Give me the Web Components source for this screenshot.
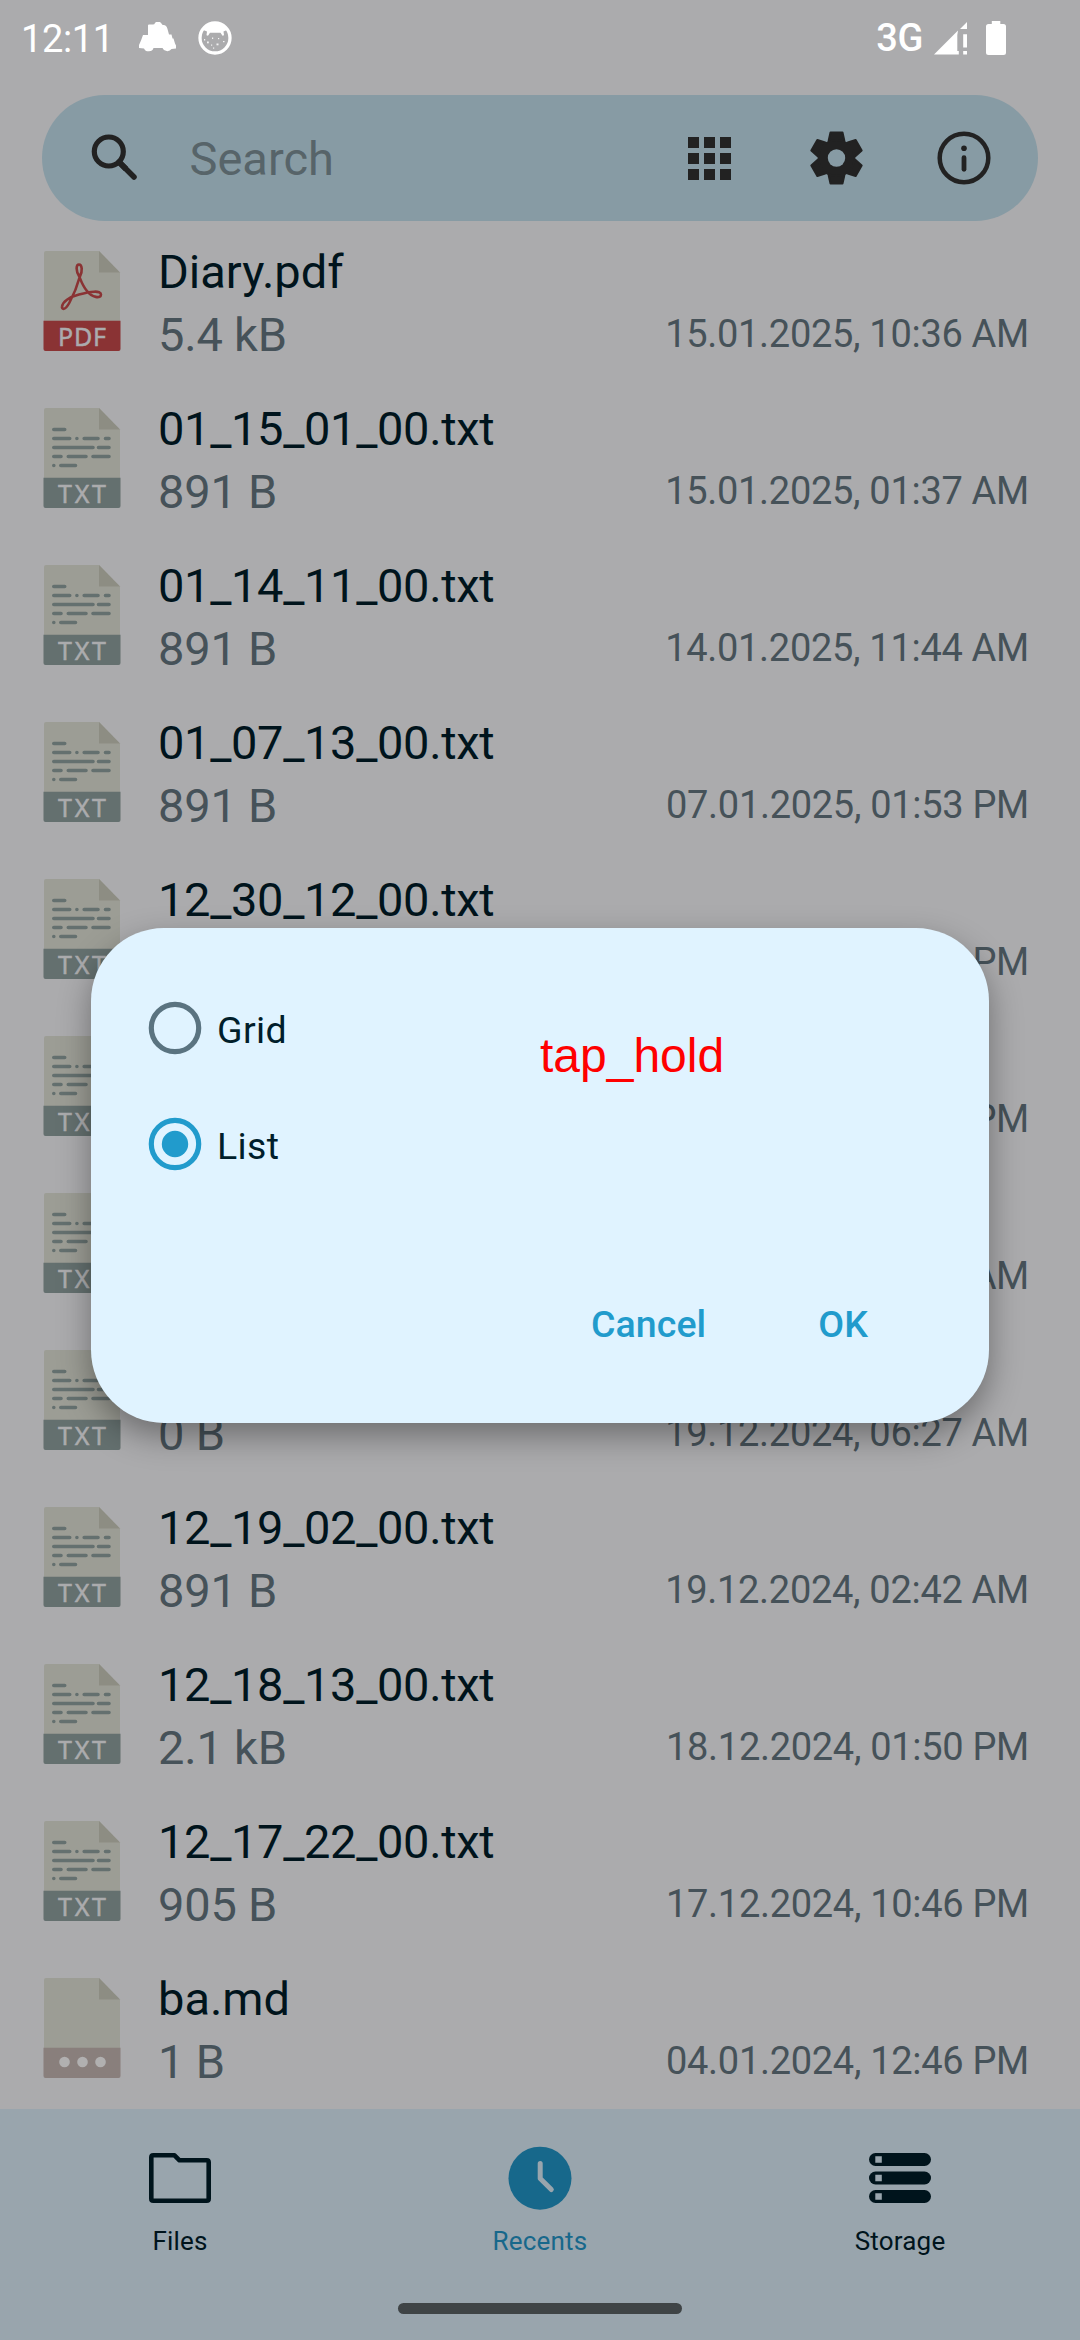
<!DOCTYPE html>
<html lang="en">
<head>
<meta charset="utf-8">
<title>Recents</title>
<style>
html,body{margin:0;padding:0}
body{width:1080px;height:2340px;overflow:hidden;background:#ababad;font-family:Roboto,sans-serif}
</style>
</head>
<body>
<file-app></file-app>
<script>
const define=(name,html)=>customElements.define(name,class extends HTMLElement{
  connectedCallback(){
    if(this.shadowRoot)return;
    const root=this.attachShadow({mode:'open'});
    root.innerHTML=typeof html==='function'?html(this):html;
  }
});

define('status-bar',`
<style>
:host{display:flex;align-items:center;height:76px;color:#fff;box-sizing:border-box;padding:0 74px 0 21px}
svg{display:block;flex:none}
.clock{font-size:38px;line-height:50px;letter-spacing:-.4px;margin-top:1px;width:118px}
.cat{margin-left:21px}
.net{margin-left:auto;font-size:38px;font-weight:500;line-height:50px;letter-spacing:-.4px;margin-right:11px}
.bat{margin-left:19px}
</style>
<span class="clock">12:11</span>
<svg width="38" height="34" viewBox="0 0 38 34" fill="#fff"><path d="M14 3.500Q15.500 3.500 16 2L17 1h4l1.500 1.500q.5 1.500 2 1.500 3 0 4 4l1.500 5.500h2.500l1 4h1l1.500 5 1 2v3l-4.500.5A5 4.500 0 0 1 23.500 27h-9A5 4.500 0 0 1 5 27.500L0 27v-3l2-4.500L4 14h5V4.500q0-1 1-1z"/></svg>
<svg class="cat" width="34" height="34" viewBox="0 0 34 34"><circle cx="17" cy="17" r="15" fill="none" stroke="#fff" stroke-width="3.300"/><path fill="#fff" d="M4 8.500Q9 2 17 2T30 8.500L25.500 10.500L26 14.300L24.500 14.800L22.500 11.800H12L10 14.800L8.500 14.300L9 10.500z"/><g fill="#fff" opacity=".85"><rect x="6" y="18" width="1.200" height="1.500"/><rect x="9" y="20.500" width="1.800" height="1.800"/><rect x="14" y="16.500" width="1.200" height="1.500"/><rect x="18.500" y="22.500" width="2" height="1.800"/><rect x="20" y="17" width="1.200" height="1.200"/><rect x="25" y="20" width="1.500" height="1.200"/><rect x="13" y="23.500" width="1.200" height="1.200"/><rect x="15" y="26.500" width="1.200" height="1.200"/></g></svg>
<span class="net">3G</span>
<svg width="33" height="34" viewBox="0 0 33 34" fill="#fff"><path d="M0 33.500L24 9.500L23.300 14V30H24.800V33.500zM26 8L33 1V8zM29.200 13.300H33V26.500H29.200zM29.200 30H33V33.500H29.200z"/></svg>
<svg class="bat" width="20" height="34" viewBox="0 0 20 34" fill="#fff"><path d="M5.800 0h8.500v3H17.500Q20 3 20 5.500V31.500Q20 34 17.500 34H2.500Q0 34 0 31.500V5.500Q0 3 2.500 3H5.800z"/></svg>`);

define('search-bar',`
<style>
:host{display:flex;align-items:center;height:126px;margin:19px 42px 4px;border-radius:63px;background:#879ba4;box-sizing:border-box;padding:0 47.500px 0 49px}
svg{display:block;flex:none}
.hint{font-size:47px;line-height:62px;color:#576469;margin:1px auto 0 50.500px}
.gear{margin-left:79px}.info{margin-left:74px}
</style>
<svg width="48" height="48" viewBox="0 0 48 48" fill="none" stroke="#222"><circle cx="17.800" cy="17.500" r="14.500" stroke-width="5.200"/><path d="M28 28L43 43" stroke-width="5.500" stroke-linecap="round"/><path d="M28 28l7 7" stroke-width="6"/></svg>
<span class="hint">Search</span>
<svg width="43" height="43" viewBox="0 0 43 43" fill="#222"><path d="M0 0h11v11H0zM16 0h11v11H16zM32 0h11v11H32zM0 16h11v11H0zM16 16h11v11H16zM32 16h11v11H32zM0 32h11v11H0zM16 32h11v11H16zM32 32h11v11H32z"/></svg>
<svg class="gear" width="53" height="54" viewBox="-26.500 -27 53 54"><defs><path id="t" d="M-7.800-17.500L-6-25.600H6L7.800-17.500L0 0z"/></defs><mask id="m"><rect x="-27" y="-27" width="54" height="54" fill="#fff"/><circle r="8.700" fill="#000"/></mask><g fill="#222" stroke="#222" stroke-width="2" stroke-linejoin="round" mask="url(#m)"><use href="#t"/><use href="#t" transform="rotate(60)"/><use href="#t" transform="rotate(120)"/><use href="#t" transform="rotate(180)"/><use href="#t" transform="rotate(240)"/><use href="#t" transform="rotate(300)"/><circle r="18"/></g></svg>
<svg class="info" width="54" height="54" viewBox="-27 -27 54 54"><circle r="24.300" fill="none" stroke="#222" stroke-width="4.500"/><circle cy="-9.800" r="2.800" fill="#222"/><path d="M0-.3V11.300" stroke="#222" stroke-width="4.800" stroke-linecap="round"/></svg>`);

const bands={pdf:'#8a3334',txt:'#64706f',md:'#897f7c'};
const art={
  pdf:`<path fill="none" stroke="#8a3334" stroke-width="2.600" stroke-linejoin="round" d="M36.500 26C32.500 20 33 13.500 36 13.500S40 20 36.700 26C34 36 30 45 26.500 51.500C22 60 18.500 58.500 19 55.500C19.600 51 26 46 36 43.500C47 40.500 58 39 58 43.500C58 48 49 46.500 44 40C40 35.500 38.500 31 36.500 26z"/>`,
  txt:`<path fill="none" stroke="#64706f" stroke-width="3.600" stroke-linecap="round" d="M10.800 21.500H21.700M10.800 30.500H26.700M33.900 30.500H33.901M41.200 30.500H55M62.500 30.500H66M10.800 39.500H50M55.500 39.500H66M10.800 48.500H18M25.300 48.500H43M50 48.500H66M10.800 57.500H10.801M17.800 57.500H32.500"/>`,
  md:''
};
define('file-icon',el=>{
  const k=el.getAttribute('kind');
  const tag=k==='md'
    ?'<g fill="#b1b0b0"><circle cx="21.500" cy="84" r="5.300"/><circle cx="39.500" cy="84" r="5.300"/><circle cx="57.500" cy="84" r="5.300"/></g>'
    :`<text x="39" y="94.800" text-anchor="middle" textLength="48" fill="#ababad" stroke="#ababad" stroke-width=".5" font-family="'Noto Sans',sans-serif" font-size="25">${k.toUpperCase()}</text>`;
  return `<style>:host{display:block;width:78px;height:100px;flex:none}svg{display:block;overflow:visible}</style>
<svg width="78" height="106" viewBox="0 0 78 106"><path fill="#9c9d95" d="M3 0H56L77 21.500V71H1V2Q1 0 3 0z"/><path fill="#8d8d83" d="M56 0L77 21.500H56z"/>${art[k]}<path fill="${bands[k]}" d="M.5 69.700H77.500V98Q77.500 100 75.500 100H2.500Q.5 100 .5 98z"/>${tag}</svg>`;
});

define('file-row',el=>`
<style>
:host{display:flex;height:157px;box-sizing:border-box;padding:0 51px 0 43px}
file-icon{margin-top:26px}
.main{display:flex;flex-direction:column;margin:15px 0 0 37px;font-size:47px}
.main span{display:block;height:63px;line-height:63px;white-space:nowrap}
.name{color:#00141c}.name.digits{letter-spacing:-.34px}.size{color:#465259;letter-spacing:-.2px}
.date{margin:84px 0 0 auto;font-size:38px;line-height:50px;letter-spacing:-.3px;color:#465259;white-space:nowrap}
</style>
<file-icon kind="${el.getAttribute('kind')}"></file-icon>
<div class="main"><span class="name${el.getAttribute('kind')==='txt'?' digits':''}">${el.getAttribute('name')||''}</span><span class="size">${el.getAttribute('size')||''}</span></div>
<span class="date"><slot></slot></span>`);

define('nav-item',el=>`
<style>
:host{display:flex;flex:1;flex-direction:column;align-items:center;color:${el.hasAttribute('active')?'#17688b':'#00141c'}}
.ic{height:64px;display:flex;align-items:center;margin-top:37px}
.label{font-size:26px;line-height:34px;margin-top:14px;letter-spacing:.2px}
</style><span class="ic"><slot name="icon"></slot></span><span class="label"><slot></slot></span>`);

define('bottom-nav',`
<style>
:host{display:flex;flex-direction:column;height:231px;background:#99a5ad}
.tabs{display:flex;height:194px}
.home{width:284px;height:11px;border-radius:5.500px;background:#3f4446;align-self:center}
svg{display:block}
</style>
<div class="tabs">
<nav-item><svg slot="icon" width="62" height="50" viewBox="0 0 62 50" fill="none" stroke="#00141c" stroke-width="4.600" stroke-linejoin="round"><path d="M4.300 2.300H25.500L30.500 7.300H57.700Q59.700 7.300 59.700 9.300V45.700Q59.700 47.700 57.700 47.700H4.300Q2.300 47.700 2.300 45.700V4.300Q2.300 2.300 4.300 2.300z"/></svg>Files</nav-item>
<nav-item active><svg slot="icon" width="64" height="64" viewBox="0 0 64 64"><circle cx="32" cy="32.200" r="31.500" fill="#17688b"/><path d="M32.200 17.500V32.500L43.300 43.500" fill="none" stroke="#99a5ad" stroke-width="5" stroke-linecap="round" stroke-linejoin="round"/></svg>Recents</nav-item>
<nav-item><svg slot="icon" width="62" height="50" viewBox="0 0 62 50"><g fill="#00141c"><rect width="62" height="13" rx="6.500"/><rect y="18.500" width="62" height="13" rx="6.500"/><rect y="37" width="62" height="13" rx="6.500"/></g><path fill="#99a5ad" d="M6.300 3.300h6.500v6.500H6.300zM6.300 21.800h6.500v6.500H6.300zM6.300 40.300h6.500v6.500H6.300z"/></svg>Storage</nav-item>
</div><div class="home"></div>`);

define('radio-option',el=>`
<style>
:host{display:flex;align-items:center;height:116px;font-size:37.500px;letter-spacing:.4px;color:#001e2b}
svg{display:block;margin-right:15px}
span{line-height:50px;margin-top:4px}
</style>
<svg width="54" height="54" viewBox="-27 -27 54 54"><circle r="23.700" fill="none" stroke="${el.hasAttribute('checked')?'#219bcc':'#5a7380'}" stroke-width="5.200"/>${el.hasAttribute('checked')?'<circle r="13.200" fill="#219bcc"/>':''}</svg>
<span><slot></slot></span>`);

define('view-dialog',`
<style>
:host{display:flex;flex-direction:column;width:898px;height:495px;box-sizing:border-box;border-radius:73px;background:#e0f3ff;box-shadow:0 13px 32px rgba(0,0,0,.36);padding:42px 57px 0}
.actions{display:flex;justify-content:flex-end;gap:112px;margin-top:97px;padding-right:64px;font-size:37.500px;font-weight:500;line-height:50px;letter-spacing:.1px;color:#219bcc}
</style>
<radio-option>Grid</radio-option>
<radio-option checked>List</radio-option>
<div class="actions"><span>Cancel</span><span>OK</span></div>`);

define('file-app',`
<style>
:host{display:block;position:relative;width:1080px;height:2340px;background:#ababad}
view-dialog{position:absolute;left:91px;top:928px}
.note{position:absolute;left:540px;top:1028px;font:48px/56px "Liberation Sans",Arial,sans-serif;color:#f00}
</style>
<status-bar></status-bar>
<search-bar></search-bar>
<file-row kind="pdf" name="Diary.pdf" size="5.4 kB">15.01.2025, 10:36 AM</file-row>
<file-row kind="txt" name="01_15_01_00.txt" size="891 B">15.01.2025, 01:37 AM</file-row>
<file-row kind="txt" name="01_14_11_00.txt" size="891 B">14.01.2025, 11:44 AM</file-row>
<file-row kind="txt" name="01_07_13_00.txt" size="891 B">07.01.2025, 01:53 PM</file-row>
<file-row kind="txt" name="12_30_12_00.txt">PM</file-row>
<file-row kind="txt">PM</file-row>
<file-row kind="txt">AM</file-row>
<file-row kind="txt" size="0 B">19.12.2024, 06:27 AM</file-row>
<file-row kind="txt" name="12_19_02_00.txt" size="891 B">19.12.2024, 02:42 AM</file-row>
<file-row kind="txt" name="12_18_13_00.txt" size="2.1 kB">18.12.2024, 01:50 PM</file-row>
<file-row kind="txt" name="12_17_22_00.txt" size="905 B">17.12.2024, 10:46 PM</file-row>
<file-row kind="md" name="ba.md" size="1 B">04.01.2024, 12:46 PM</file-row>
<bottom-nav></bottom-nav>
<view-dialog></view-dialog>
<div class="note">tap_hold</div>`);
</script>
</body>
</html>
